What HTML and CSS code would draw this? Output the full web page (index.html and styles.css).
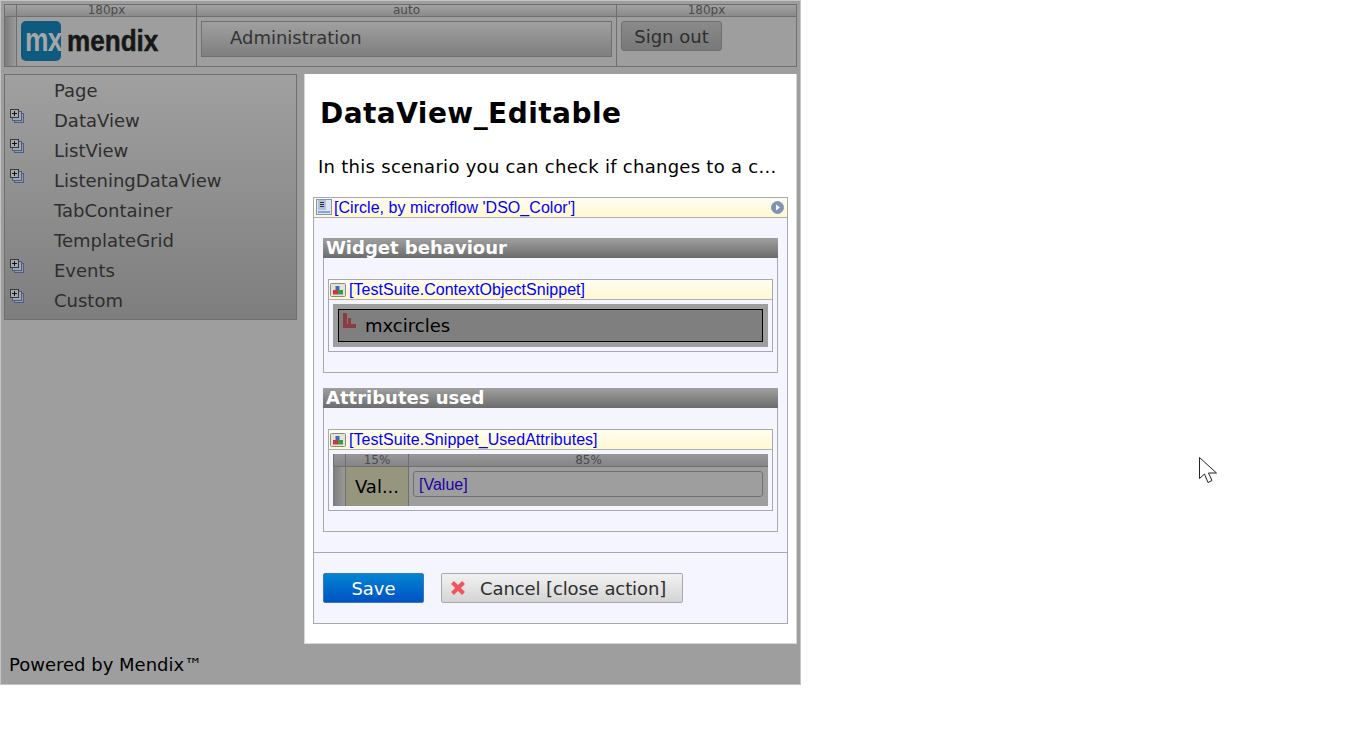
FILE: index.html
```html
<!DOCTYPE html>
<html lang="en">
<head>
<meta charset="UTF-8">
<title>DataView_Editable</title>
<link rel="stylesheet" href="styles.css">
</head>
<body>
<div class="app">
    <div class="layout-grid top-grid">
        <div class="grid-head gutter"></div>
        <div class="grid-head logo-col">180px</div>
        <div class="grid-head">auto</div>
        <div class="grid-head">180px</div>
        <div class="grid-cell gutter dark"></div>
        <div class="grid-cell logo-col">
            <div class="logo">
                <span class="logo-mark"><span class="logo-mx">mx</span></span>
                <span class="logo-word">mendix</span>
            </div>
        </div>
        <div class="grid-cell pad-nav">
            <div class="nav-bar">Administration</div>
        </div>
        <div class="grid-cell pad-sign">
            <button class="sign-out" type="button">Sign out</button>
        </div>
    </div>

    <div class="middle">
        <ul class="side-nav">
            <li class="nav-item"><span class="nav-name">Page</span></li>
            <li class="nav-item">
                <svg class="expand" width="15" height="15" viewBox="0 0 15 15"><rect x="4.5" y="4.5" width="9" height="9" fill="#8f98a8" stroke="#4f5f80"/><rect x="2.5" y="2.5" width="9" height="9" fill="#a0a6b2" stroke="#4f5f80"/><rect x="0.5" y="0.5" width="8" height="8" fill="#a9a9a9" stroke="#303848"/><path d="M2 4.5h5M4.5 2v5" stroke="#111"/></svg>
                <span class="nav-name">DataView</span>
            </li>
            <li class="nav-item">
                <svg class="expand" width="15" height="15" viewBox="0 0 15 15"><rect x="4.5" y="4.5" width="9" height="9" fill="#8f98a8" stroke="#4f5f80"/><rect x="2.5" y="2.5" width="9" height="9" fill="#a0a6b2" stroke="#4f5f80"/><rect x="0.5" y="0.5" width="8" height="8" fill="#a9a9a9" stroke="#303848"/><path d="M2 4.5h5M4.5 2v5" stroke="#111"/></svg>
                <span class="nav-name">ListView</span>
            </li>
            <li class="nav-item">
                <svg class="expand" width="15" height="15" viewBox="0 0 15 15"><rect x="4.5" y="4.5" width="9" height="9" fill="#8f98a8" stroke="#4f5f80"/><rect x="2.5" y="2.5" width="9" height="9" fill="#a0a6b2" stroke="#4f5f80"/><rect x="0.5" y="0.5" width="8" height="8" fill="#a9a9a9" stroke="#303848"/><path d="M2 4.5h5M4.5 2v5" stroke="#111"/></svg>
                <span class="nav-name">ListeningDataView</span>
            </li>
            <li class="nav-item"><span class="nav-name">TabContainer</span></li>
            <li class="nav-item"><span class="nav-name">TemplateGrid</span></li>
            <li class="nav-item">
                <svg class="expand" width="15" height="15" viewBox="0 0 15 15"><rect x="4.5" y="4.5" width="9" height="9" fill="#8f98a8" stroke="#4f5f80"/><rect x="2.5" y="2.5" width="9" height="9" fill="#a0a6b2" stroke="#4f5f80"/><rect x="0.5" y="0.5" width="8" height="8" fill="#a9a9a9" stroke="#303848"/><path d="M2 4.5h5M4.5 2v5" stroke="#111"/></svg>
                <span class="nav-name">Events</span>
            </li>
            <li class="nav-item">
                <svg class="expand" width="15" height="15" viewBox="0 0 15 15"><rect x="4.5" y="4.5" width="9" height="9" fill="#8f98a8" stroke="#4f5f80"/><rect x="2.5" y="2.5" width="9" height="9" fill="#a0a6b2" stroke="#4f5f80"/><rect x="0.5" y="0.5" width="8" height="8" fill="#a9a9a9" stroke="#303848"/><path d="M2 4.5h5M4.5 2v5" stroke="#111"/></svg>
                <span class="nav-name">Custom</span>
            </li>
        </ul>

        <div class="content">
            <h1 class="page-title">DataView_Editable</h1>
            <p class="intro">In this scenario you can check if changes to a c...</p>

            <div class="form-panel">
                <div class="title-bar">
                    <svg class="title-icon" width="16" height="17" viewBox="0 0 16 17"><rect x="0.5" y="0.5" width="15" height="15" fill="#dfe6f2" stroke="#7f96bc"/><rect x="2" y="1" width="8" height="10" fill="#b4bfd2"/><path d="M4 3.5h4M4 5.5h4M4 7.5h4" stroke="#26324e"/><path d="M2 13h12" stroke="#7fa8dc" stroke-width="2"/></svg>
                    <span class="blue-link">[Circle, by microflow 'DSO_Color']</span>
                    <svg class="play" width="13" height="13" viewBox="0 0 13 13"><circle cx="6.5" cy="6.5" r="6" fill="#7f93b8" stroke="#8a96aa"/><path d="M5 3.5l4 3-4 3z" fill="#fff"/></svg>
                </div>
                <div class="form-body">
                    <div class="group">
                        <div class="group-head">Widget behaviour</div>
                        <div class="group-body">
                            <div class="snippet">
                                <div class="title-bar small">
                                    <svg class="title-icon" width="16" height="14" viewBox="0 0 16 14"><rect x="0.5" y="0.5" width="15" height="13" rx="1" fill="#e4e2da" stroke="#8b8b84"/><rect x="5.5" y="3" width="4" height="4" fill="#3a6ac8"/><rect x="3" y="7" width="5" height="4.5" fill="#c83a3a"/><rect x="8" y="7" width="5" height="4.5" fill="#3a9a4a"/></svg>
                                    <span class="blue-link">[TestSuite.ContextObjectSnippet]</span>
                                </div>
                                <div class="widget-wrap">
                                    <div class="widget">
                                        <svg class="widget-icon" width="13" height="15" viewBox="0 0 13 15"><path d="M0 0h4v11h1V5h3v6h5v4H0z" fill="#8b3c3f"/></svg>
                                        <span>mxcircles</span>
                                    </div>
                                </div>
                            </div>
                        </div>
                    </div>

                    <div class="group">
                        <div class="group-head">Attributes used</div>
                        <div class="group-body">
                            <div class="snippet">
                                <div class="title-bar small">
                                    <svg class="title-icon" width="16" height="14" viewBox="0 0 16 14"><rect x="0.5" y="0.5" width="15" height="13" rx="1" fill="#e4e2da" stroke="#8b8b84"/><rect x="5.5" y="3" width="4" height="4" fill="#3a6ac8"/><rect x="3" y="7" width="5" height="4.5" fill="#c83a3a"/><rect x="8" y="7" width="5" height="4.5" fill="#3a9a4a"/></svg>
                                    <span class="blue-link">[TestSuite.Snippet_UsedAttributes]</span>
                                </div>
                                <div class="attr-grid">
                                    <div class="attr-head"></div>
                                    <div class="attr-head">15%</div>
                                    <div class="attr-head">85%</div>
                                    <div class="attr-gutter"></div>
                                    <div class="attr-label">Val...</div>
                                    <div class="attr-value"><div class="attr-input">[Value]</div></div>
                                </div>
                            </div>
                        </div>
                    </div>
                </div>
                <div class="form-footer">
                    <button class="btn-save" type="button">Save</button>
                    <button class="btn-cancel" type="button">
                        <svg width="14" height="14" viewBox="0 0 14 14"><path d="M1.5 1.5l11 11M12.5 1.5l-11 11" stroke="#f2545f" stroke-width="4"/></svg>
                        <span>Cancel [close action]</span>
                    </button>
                </div>
            </div>
        </div>
    </div>

    <div class="powered">Powered by Mendix™</div>
</div>

<svg class="cursor" width="19" height="28" viewBox="0 0 19 28"><path d="M0.5 0.5V21.5L5.5 17L9 25.5L13 23.5L9.5 16H17.5Z" fill="#fff" stroke="#222"/></svg>
</body>
</html>
```

FILE: styles.css
```css
* {
    box-sizing: border-box;
}
body {
    margin: 0;
    background-color: #fff;
    font-family: "DejaVu Sans", Verdana, sans-serif;
}
.app {
    position: relative;
    width: 801px;
    height: 685px;
    padding: 3px 3px 0 3px;
    background-color: #9e9e9e;
    border: 1px solid #c4c4c4;
    display: flex;
    flex-direction: column;
}

/* top layout grid */
.top-grid {
    display: grid;
    grid-template-columns: 12px 180px 420px 180px;
    grid-template-rows: 12px 50px;
    border-right: 1px solid #6f6f6f;
    border-bottom: 1px solid #6f6f6f;
    height: 63px;
    width: 793px;
}
.grid-head {
    background: linear-gradient(#a2a2a2, #8a8a8a);
    border-top: 1px solid #6f6f6f;
    border-left: 1px solid #6f6f6f;
    color: #4a4a4a;
    font-size: 12px;
    line-height: 10px;
    text-align: center;
}
.grid-cell {
    border-top: 1px solid #6f6f6f;
    border-left: 1px solid #6f6f6f;
}
.gutter.dark {
    background: linear-gradient(90deg, #7c7c7c, #9a9a9a);
}
.logo-col {
    padding-left: 4px;
}
.grid-head.logo-col {
    padding-left: 0;
}
.logo {
    margin-top: 4px;
    display: flex;
    align-items: center;
    gap: 6px;
}
.logo-mark {
    width: 40px;
    height: 40px;
    border-radius: 5px;
    background-color: #0f5a7f;
    color: #a6a6a6;
    font-family: "Liberation Sans", Arial, sans-serif;
    font-weight: bold;
    font-size: 33px;
    line-height: 38px;
    text-align: center;
    overflow: hidden;
}
.logo-mx {
    display: block;
    letter-spacing: -1px;
    transform: scaleX(0.8);
}
.logo-word {
    color: #171717;
    font-family: "Liberation Sans", Arial, sans-serif;
    font-weight: bold;
    font-size: 30px;
    transform: scaleX(0.87);
    transform-origin: left;
    -webkit-text-stroke: 0.5px #171717;
}
.pad-nav {
    padding: 4px 4px 0 4px;
}
.nav-bar {
    height: 36px;
    padding-left: 28px;
    border: 1px solid #6f6f6f;
    background: linear-gradient(#a0a0a0, #7f7f7f);
    color: #333;
    font-size: 18px;
    line-height: 31px;
}
.pad-sign {
    padding: 4px 0 0 4px;
}
.sign-out {
    display: block;
    width: 101px;
    height: 30px;
    padding: 0;
    border: 1px solid #6f6f6f;
    border-radius: 3px;
    background: linear-gradient(#8a8a8a, #787878);
    color: #2e2e2e;
    font-family: inherit;
    font-size: 18px;
}

/* sidebar and content */
.middle {
    margin-top: 7px;
    display: flex;
    align-items: flex-start;
    gap: 7px;
}
.side-nav {
    width: 293px;
    height: 246px;
    margin: 0;
    padding: 1px 0 0 0;
    list-style: none;
    border: 1px solid #6f6f6f;
    background: linear-gradient(#a0a0a0, #7e7e7e);
}
.nav-item {
    position: relative;
    height: 30px;
    padding-left: 49px;
    color: #2e2e2e;
    font-size: 18px;
    line-height: 30px;
}
.expand {
    position: absolute;
    left: 5px;
    top: 3px;
}
.content {
    width: 493px;
    height: 570px;
    padding: 0 8px;
    background-color: #fff;
    border: 1px solid #d8d8d8;
    border-top: 0;
}
.page-title {
    margin: 0;
    padding: 23px 0 0 7px;
    color: #000;
    font-size: 28px;
    font-weight: bold;
    line-height: 34px;
    letter-spacing: 0.45px;
}
.intro {
    margin: 24px 0 0 5px;
    color: #000;
    font-size: 18px;
    line-height: 24px;
    letter-spacing: 0.28px;
    white-space: nowrap;
}
.form-panel {
    margin-top: 18px;
    height: 427px;
    border: 1px solid #a8a8b0;
    background-color: #f4f5fe;
    display: flex;
    flex-direction: column;
}
.title-bar {
    height: 20px;
    flex: none;
    display: flex;
    align-items: center;
    padding-left: 2px;
    gap: 2px;
    background: linear-gradient(#fffdf0, #fff8d2);
    border-bottom: 1px solid #b0b0b0;
    font-family: "Liberation Sans", Arial, sans-serif;
    font-size: 16px;
    letter-spacing: 0.04px;
}
.title-bar.small {
    padding-left: 1px;
    gap: 3px;
}
.blue-link {
    color: #0000ff;
    line-height: 19px;
}
.play {
    margin-left: auto;
    margin-right: 3px;
}
.form-body {
    flex: 1;
    padding: 20px 9px 0;
    border-bottom: 1px solid #a8a8b0;
}
.group {
    margin-bottom: 15px;
}
.group-head {
    height: 20px;
    padding-left: 3px;
    background: linear-gradient(#a0a0a0, #6c6c6c);
    color: #fff;
    font-size: 18px;
    font-weight: bold;
    line-height: 20px;
}
.group-body {
    padding: 21px 4px 20px;
    border: 1px solid #a8a8b0;
    border-top: 0;
}
.snippet {
    border: 1px solid #a8a8b0;
}
.widget-wrap {
    margin: 4px 4px;
    padding: 5px;
    background-color: #9e9e9e;
    margin-bottom: 4px;
}
.widget {
    height: 33px;
    padding-left: 4px;
    border: 1px solid #000;
    background-color: #7f7f7f;
    color: #000;
    font-size: 18px;
    display: flex;
    align-items: center;
    gap: 9px;
}
.widget-icon {
    align-self: flex-start;
    margin-top: 3px;
}
.attr-grid {
    margin: 4px;
    display: grid;
    grid-template-columns: 12px 63px 360px;
    grid-template-rows: 13px 39px;
    background-color: #9e9e9e;
}
.attr-head {
    background: linear-gradient(#989898, #858585);
    border-left: 1px solid #6f6f6f;
    border-bottom: 1px solid #6f6f6f;
    color: #4a4a4a;
    font-size: 12px;
    line-height: 12px;
    text-align: center;
}
.attr-gutter {
    background: linear-gradient(90deg, #7c7c7c, #9a9a9a);
}
.attr-label {
    background-color: #96967e;
    border-left: 1px solid #6f6f6f;
    color: #000;
    font-size: 18px;
    line-height: 40px;
    text-align: center;
}
.attr-value {
    padding: 4px 5px 0 4px;
    border-left: 1px solid #6f6f6f;
}
.attr-input {
    height: 26px;
    padding-left: 5px;
    border: 1px solid #6f6f6f;
    border-radius: 3px;
    color: #1c00a8;
    font-family: "Liberation Sans", Arial, sans-serif;
    font-size: 16px;
    line-height: 25px;
}
.form-footer {
    height: 70px;
    flex: none;
    padding: 20px 9px 0;
    display: flex;
    align-items: flex-start;
    gap: 17px;
}
.btn-save {
    width: 101px;
    height: 30px;
    padding: 0;
    border: 1px solid #3a78b8;
    border-radius: 2px;
    background: linear-gradient(#0284d2, #0052c4);
    color: #fff;
    font-family: inherit;
    font-size: 18px;
}
.btn-cancel {
    width: 242px;
    height: 30px;
    padding: 0 0 0 9px;
    border: 1px solid #a8a8a8;
    border-radius: 2px;
    background: linear-gradient(#f2f2f2, #d4d4d4);
    color: #2e2e2e;
    font-family: inherit;
    font-size: 18px;
    letter-spacing: -0.1px;
    display: flex;
    align-items: center;
    gap: 15px;
}
.powered {
    margin: 9px 0 0 5px;
    color: #000;
    font-size: 18px;
    line-height: 24px;
}
.cursor {
    position: absolute;
    left: 1199px;
    top: 457px;
}
```
